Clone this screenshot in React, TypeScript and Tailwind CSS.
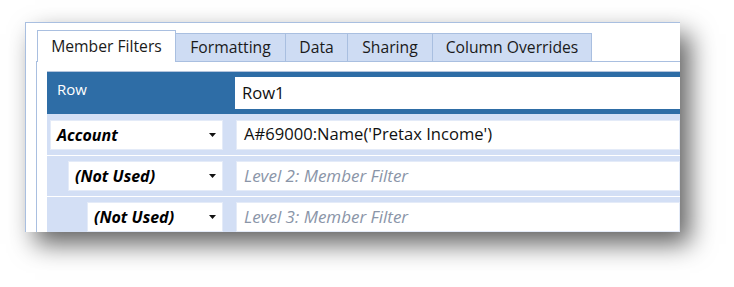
import React from "react";

const tabs = [
  { label: "Member Filters", w: "w-[139px]" },
  { label: "Formatting", w: "w-[111px]" },
  { label: "Data", w: "w-[63px]" },
  { label: "Sharing", w: "w-[86px]" },
  { label: "Column Overrides", w: "w-[160px]" },
];

const Arrow = () => (
  <svg width="7" height="4" viewBox="0 0 7 4" className="shrink-0">
    <path d="M0 0 L7 0 L3.5 4 Z" fill="#111" />
  </svg>
);

const FilterRow = ({
  indent,
  dim,
  value,
  placeholder,
  first = false,
}: {
  indent: string;
  dim: string;
  value?: string;
  placeholder?: string;
  first?: boolean;
}) => (
  <div
    className={`flex h-[41px] items-center bg-[#d3dff5] ${
      first ? "" : "border-t border-white"
    }`}
  >
    <div className="flex w-[188px] shrink-0 justify-end pr-[12px]">
      <div
        className={`flex h-[30px] ${indent} items-center justify-between border border-[#e4ebf8] bg-white pl-[6px] pr-[6px]`}
      >
        <span className="text-[16px] font-bold italic text-black">{dim}</span>
        <Arrow />
      </div>
    </div>
    <div className="ml-[1px] flex h-[30px] flex-1 items-center border border-[#e4ebf8] bg-white pl-[7px]">
      {value ? (
        <span className="text-[16.6px] text-[#111]">{value}</span>
      ) : (
        <span className="text-[17px] italic text-[#8a95a8]">{placeholder}</span>
      )}
    </div>
  </div>
);

export default function App() {
  return (
    <div
      className="h-[287px] w-[734px] overflow-hidden bg-white pl-[25px] pt-[22px]"
      style={{ fontFamily: '"Open Sans", "Noto Sans", sans-serif' }}
    >
      <div className="h-[210px] w-[655px] overflow-hidden border-l border-t border-[#a9bfe0] bg-white shadow-[10px_12px_24px_rgba(0,0,0,0.62)]">
        <div className="ml-[10px] pt-[7px]">
          {/* tab strip */}
          <div className="flex h-[32px] items-end border-b border-[#a9bfe0] pl-[1px]">
            {tabs.map((t, i) =>
              i === 0 ? (
                <div
                  key={t.label}
                  className={`${t.w} -mb-px flex h-[32px] items-center justify-center border border-b-0 border-[#a9bfe0] bg-white text-[15.7px] text-[#1a1a1a]`}
                >
                  {t.label}
                </div>
              ) : (
                <div
                  key={t.label}
                  className={`${t.w} -ml-px flex h-[28px] items-center justify-center border border-b-0 border-[#a9bfe0] bg-[#cedcf3] text-[15.7px] text-[#1a1a1a]`}
                >
                  {t.label}
                </div>
              )
            )}
          </div>
          {/* panel */}
          <div className="h-[200px] border-l border-[#a9bfe0] pl-[10px] pt-[9px]">
            <div className="border-t border-[#b4c4dc]">
              <div className="flex h-[42px] bg-[#2e6da6]">
                <div className="w-[188px] shrink-0 pl-[10px] pt-[6px] text-[15px] text-white">
                  Row
                </div>
                <div className="mt-[5px] flex h-[32px] flex-1 items-center bg-white pl-[7px] text-[16.6px] text-[#111]">
                  Row1
                </div>
              </div>
              <FilterRow
                first
                indent="w-[173px]"
                dim="Account"
                value="A#69000:Name('Pretax Income')"
              />
              <FilterRow
                indent="w-[155px]"
                dim="(Not Used)"
                placeholder="Level 2: Member Filter"
              />
              <FilterRow
                indent="w-[136px]"
                dim="(Not Used)"
                placeholder="Level 3: Member Filter"
              />
            </div>
          </div>
        </div>
      </div>
    </div>
  );
}
